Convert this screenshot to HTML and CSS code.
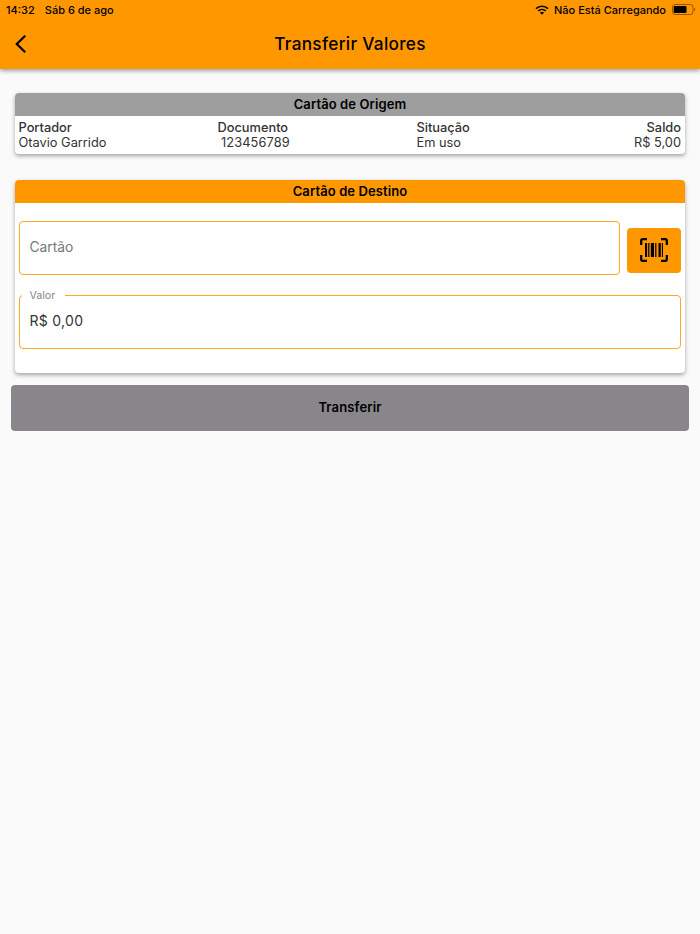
FILE: index.html
```html
<!DOCTYPE html>
<html lang="pt-BR">
<head>
    <meta charset="utf-8">
    <title>Transferir Valores</title>
    <link rel="stylesheet" href="styles.css">
</head>
<body>
    <header class="app-bar">
        <div class="status-bar">
            <span class="hora">14:32</span>
            <span class="data">Sáb 6 de ago</span>
            <svg class="wifi" width="14" height="10" viewBox="0 0 14 10">
                <path d="M1 3.7a8.6 8.6 0 0 1 12 0M3.2 6a5.5 5.5 0 0 1 7.6 0" fill="none" stroke="#000" stroke-width="1.7"/>
                <path d="M4.9 7.6a3.1 3.1 0 0 1 4.2 0L7 9.7z"/>
            </svg>
            <span class="carga">Não Está Carregando</span>
            <svg class="bateria" width="24" height="11" viewBox="0 0 24 11">
                <rect x=".5" y=".5" width="20.5" height="10" rx="2.6" fill="none" stroke="#000" stroke-opacity=".42"/>
                <rect x="1.7" y="2" width="12.8" height="7" rx="1"/>
                <path d="M22.2 3.8c1.5.5 1.5 2.9 0 3.4z" fill-opacity=".45"/>
            </svg>
        </div>
        <div class="toolbar">
            <svg class="voltar" width="12" height="18" viewBox="0 0 12 18">
                <path d="M10.2 .8L1.8 9l8.4 8.2" fill="none" stroke="#000" stroke-width="2.2"/>
            </svg>
            <h1>Transferir Valores</h1>
        </div>
    </header>

    <main>
        <section class="card origem">
            <h2>Cartão de Origem</h2>
            <div class="dados">
                <div><b>Portador</b><span>Otavio Garrido</span></div>
                <div><b>Documento</b><span class="numero">123456789</span></div>
                <div><b>Situação</b><span>Em uso</span></div>
                <div class="saldo"><b>Saldo</b><span>R$ 5,00</span></div>
            </div>
        </section>

        <section class="card destino">
            <h2>Cartão de Destino</h2>
            <div class="linha">
                <div class="campo">Cartão</div>
                <button class="scan" type="button" aria-label="Ler código">
                    <svg width="28" height="24" viewBox="0 0 28 24">
                        <path d="M1.2 7V2.7Q1.2 1.2 2.7 1.2H7M21 1.2h4.3q1.5 0 1.5 1.5V7M26.8 17v4.3q0 1.5-1.5 1.5H21M7 22.8H2.7q-1.5 0-1.5-1.5V17" fill="none" stroke="#000" stroke-width="2.2"/>
                        <path d="M5 5h2.1v14H5zM8.2 5h1.2v14H8.2zM10.8 5H14v14h-3.2zM15.2 5h1.2v14h-1.2zM18.5 5h2.3v14h-2.3zM21.9 5H23v14h-1.1z"/>
                    </svg>
                </button>
            </div>
            <fieldset class="valor">
                <legend>Valor</legend>
                <span>R$ 0,00</span>
            </fieldset>
        </section>

        <button class="transferir" type="button">Transferir</button>
    </main>
</body>
</html>
```
FILE: styles.css
```css
* {
    box-sizing: border-box;
}

body {
    margin: 0;
    background-color: #fafafa;
    color: #333;
    font-family: Inter, "Liberation Sans", sans-serif;
}

h1, h2 {
    margin: 0;
}

button {
    border: none;
    padding: 0;
    font-family: inherit;
}

.app-bar {
    height: 69px;
    background-color: #ff9800;
    color: #000;
    box-shadow: 0 2px 4px rgba(0, 0, 0, 0.35);
}

.status-bar {
    display: flex;
    align-items: center;
    height: 19px;
    padding: 0 4px 0 6px;
    font-size: 11px;
    font-weight: 500;
}

.data {
    margin-left: 10px;
}

.wifi {
    margin-left: auto;
}

.carga {
    margin: 0 6px 0 5px;
}

.toolbar {
    display: grid;
    grid-template-columns: 60px 1fr 60px;
    align-items: center;
    height: 50px;
}

.voltar {
    margin-left: 14.5px;
}

.toolbar h1 {
    padding-bottom: 1px;
    font-size: 17.2px;
    font-weight: 450;
    letter-spacing: 0.3px;
    text-align: center;
}

main {
    padding: 24px 11px 0;
}

.card {
    margin: 0 4px;
    border-radius: 4px;
    background-color: #fff;
    box-shadow: 0 2px 4px rgba(0, 0, 0, 0.35);
}

.card h2 {
    height: 23px;
    border-radius: 4px 4px 0 0;
    color: #000;
    font-size: 13px;
    font-weight: 600;
    letter-spacing: 0.1px;
    line-height: 22px;
    text-align: center;
}

.origem {
    height: 61px;
    margin-bottom: 26px;
}

.origem h2 {
    background-color: #9e9e9e;
}

.dados {
    display: grid;
    grid-template-columns: repeat(3, 199px) 1fr;
    padding: 4px 4px 0 3.5px;
    font-size: 12.8px;
    line-height: 15.3px;
}

.dados b,
.dados span {
    display: block;
}

.dados b {
    font-weight: 500;
}

.dados .numero {
    padding-left: 3.5px;
    letter-spacing: 0.1px;
}

.saldo {
    text-align: right;
}

.destino {
    height: 192.5px;
    margin-bottom: 12.5px;
}

.destino h2 {
    background-color: #ff9800;
}

.linha {
    display: flex;
    gap: 7px;
    padding: 18px 4px 0 3.5px;
}

.campo {
    flex: 1;
    height: 54px;
    padding-left: 10px;
    border: 1px solid #ffa726;
    border-radius: 4px;
    color: #777;
    font-size: 13.8px;
    line-height: 50px;
}

.scan {
    display: flex;
    align-items: center;
    justify-content: center;
    width: 54.5px;
    height: 45.5px;
    margin-top: 6.5px;
    border-radius: 4px;
    background-color: #ff9800;
}

.valor {
    height: 59.5px;
    margin: 14px 4px 0 3.5px;
    padding: 0 2px;
    border: 1px solid #ffa726;
    border-radius: 4px;
    font-size: 14px;
}

.valor legend {
    padding: 0 10px 0 8px;
    color: #888;
    font-size: 10.6px;
    line-height: 13px;
}

.valor span {
    display: block;
    padding: 10px 0 0 8px;
    letter-spacing: 0.3px;
    line-height: 18px;
}

.transferir {
    display: block;
    width: 100%;
    height: 45.5px;
    padding-bottom: 1px;
    border-radius: 4px;
    background-color: #89868b;
    color: #000;
    font-size: 13px;
    font-weight: 600;
    letter-spacing: 0.15px;
}
```
